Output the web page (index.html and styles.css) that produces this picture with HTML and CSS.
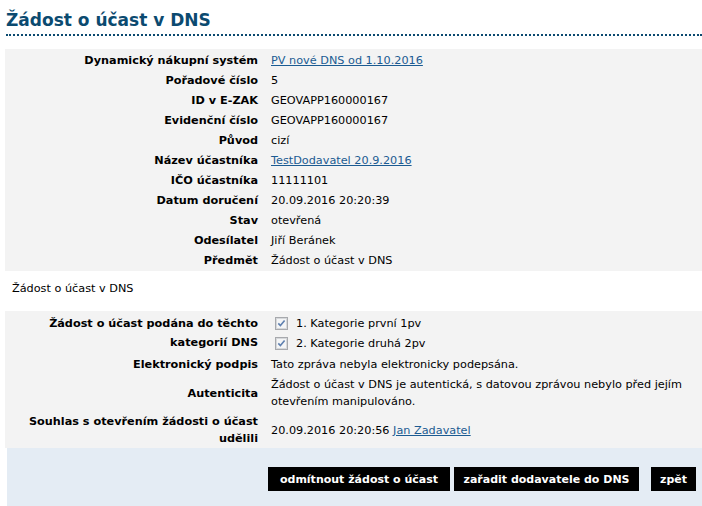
FILE: index.html
```html
<!DOCTYPE html>
<html lang="cs">
<head>
<meta charset="utf-8">
<title>Žádost o účast v DNS</title>
<link rel="stylesheet" href="styles.css">
</head>
<body>
<h1 class="title">Žádost o účast v DNS</h1>

<div class="panel">
  <div class="grid">
    <div class="lbl">Dynamický nákupní systém</div><div class="val"><a href="#">PV nové DNS od 1.10.2016</a></div>
    <div class="lbl">Pořadové číslo</div><div class="val">5</div>
    <div class="lbl">ID v E-ZAK</div><div class="val">GEOVAPP160000167</div>
    <div class="lbl">Evidenční číslo</div><div class="val">GEOVAPP160000167</div>
    <div class="lbl">Původ</div><div class="val">cizí</div>
    <div class="lbl">Název účastníka</div><div class="val"><a href="#">TestDodavatel 20.9.2016</a></div>
    <div class="lbl">IČO účastníka</div><div class="val">11111101</div>
    <div class="lbl">Datum doručení</div><div class="val">20.09.2016 20:20:39</div>
    <div class="lbl">Stav</div><div class="val">otevřená</div>
    <div class="lbl">Odesílatel</div><div class="val">Jiří Beránek</div>
    <div class="lbl">Předmět</div><div class="val">Žádost o účast v DNS</div>
  </div>
</div>

<div class="note">Žádost o účast v DNS</div>

<div class="panel panel-second">
  <div class="grid">
    <div class="lbl lbl-tall">Žádost o účast podána do těchto<br>kategorií DNS</div>
    <div class="val">
      <div class="check-row"><span class="cb"><svg width="13" height="13" viewBox="0 0 13 13"><rect x="0.5" y="0.5" width="12" height="12" fill="#eef0f2" stroke="#a7a9ad"/><rect x="1.5" y="1.5" width="10" height="10" fill="#f4f5f6" stroke="#d6d8db"/><path d="M3.3 6.4 L5.4 8.6 L9.6 3.6" fill="none" stroke="#5f80b0" stroke-width="1.6"/></svg></span>1. Kategorie první 1pv</div>
      <div class="check-row"><span class="cb"><svg width="13" height="13" viewBox="0 0 13 13"><rect x="0.5" y="0.5" width="12" height="12" fill="#eef0f2" stroke="#a7a9ad"/><rect x="1.5" y="1.5" width="10" height="10" fill="#f4f5f6" stroke="#d6d8db"/><path d="M3.3 6.4 L5.4 8.6 L9.6 3.6" fill="none" stroke="#5f80b0" stroke-width="1.6"/></svg></span>2. Kategorie druhá 2pv</div>
    </div>
    <div class="lbl">Elektronický podpis</div><div class="val">Tato zpráva nebyla elektronicky podepsána.</div>
    <div class="lbl">Autenticita</div><div class="val">Žádost o účast v DNS je autentická, s datovou zprávou nebylo před jejím<br>otevřením manipulováno.</div>
    <div class="lbl">Souhlas s otevřením žádosti o účast<br>udělili</div><div class="val">20.09.2016 20:20:56 <a href="#">Jan Zadavatel</a></div>
  </div>
</div>

<div class="actions">
  <button class="btn btn-reject" type="button">odmítnout žádost o účast</button>
  <button class="btn btn-add" type="button">zařadit dodavatele do DNS</button>
  <button class="btn btn-back" type="button">zpět</button>
</div>
</body>
</html>
```

FILE: styles.css
```css
html, body {
  margin: 0;
  padding: 0;
  background: #ffffff;
}

body {
  font-family: "DejaVu Sans", Verdana, sans-serif;
  font-size: 11.25px;
  color: #000;
}

.title {
  margin: 10px 0 0 6px;
  padding: 0 0 4px 0;
  font-size: 17px;
  line-height: 20px;
  font-weight: bold;
  color: #0b4a70;
  border-bottom: 2px dotted #0b4a70;
}

.panel {
  margin: 13px 0 0 5px;
  padding: 1px 0;
  background: #f3f3f3;
}

.panel-second {
  margin-top: 0;
  padding: 0;
}

.grid {
  display: grid;
  grid-template-columns: 260px 1fr;
}

.lbl,
.val {
  padding: 2px 0 1px;
  line-height: 17px;
  align-self: center;
}

.lbl {
  text-align: right;
  padding-right: 7px;
  font-weight: bold;
}

.lbl-tall {
  line-height: 19px;
}

.val {
  padding-left: 6px;
}

.val a {
  color: #1b5b92;
  text-decoration: underline;
}

.check-row {
  display: flex;
  align-items: center;
  height: 20px;
}

.cb {
  display: inline-flex;
  width: 13px;
  height: 13px;
  margin: 0 8px 0 4px;
}

.note {
  margin-left: 5px;
  padding: 9px 7px 14px;
  line-height: 17px;
}

.actions {
  margin-left: 7px;
  padding: 19px 6px 20px;
  background: #e4ecf4;
  display: flex;
  justify-content: flex-end;
  gap: 4px;
}

.btn {
  height: 24px;
  padding: 0;
  border: none;
  background: #000;
  color: #fff;
  font-family: "DejaVu Sans", Verdana, sans-serif;
  font-size: 11px;
  font-weight: bold;
  text-align: center;
  cursor: pointer;
}

.btn-reject {
  width: 182px;
}

.btn-add {
  width: 185px;
}

.btn-back {
  width: 45px;
  margin-left: 8px;
}
```
